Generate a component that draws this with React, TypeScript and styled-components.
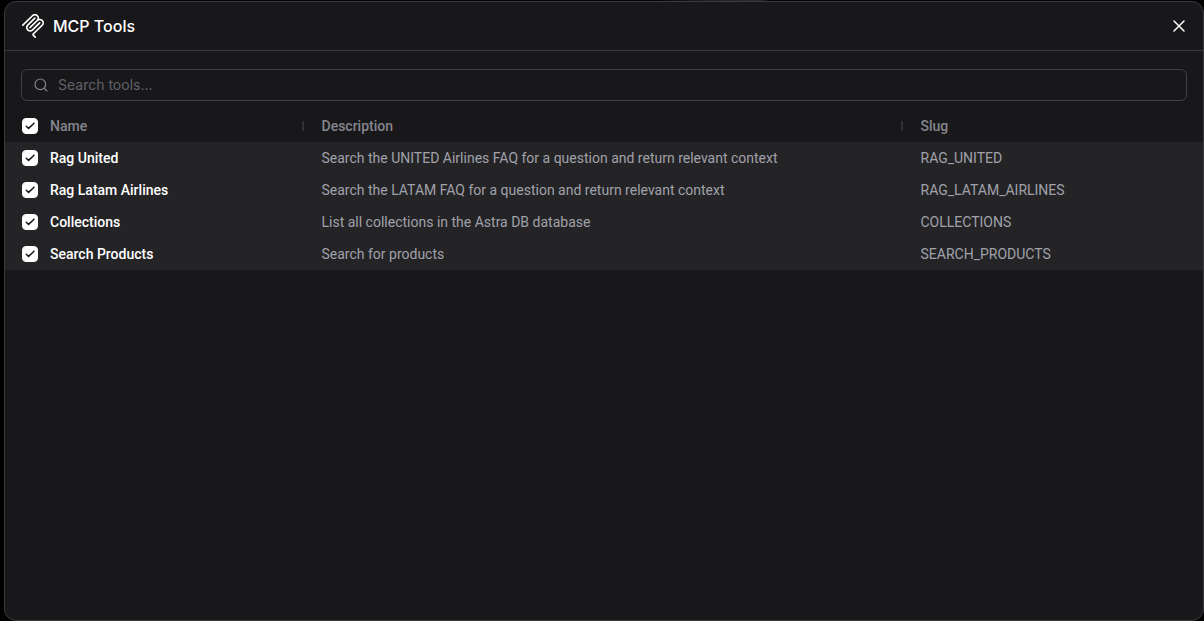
import React, { useState } from "react";
import styled, { createGlobalStyle } from "styled-components";

const GlobalStyle = createGlobalStyle`
  *, *::before, *::after { box-sizing: border-box; }
  html, body { margin: 0; background: #000; }
  body { font-family: Inter, "Liberation Sans", sans-serif; color: #fff; }
`;

const Page = styled.div`
  min-height: 100vh;
  display: flex;
  padding: 1px 0 0 4px;
  background: linear-gradient(90deg, transparent 54%, #202022 59%, #2a2a2c 63%, transparent 64%) #000;
  background-size: 100% 1px;
  background-repeat: no-repeat;
`;

const Dialog = styled.section`
  flex: 1;
  min-width: 0;
  display: flex;
  flex-direction: column;
  background: #18181b;
  border: 1px solid #3a3a3f;
  border-radius: 12px;
  overflow: hidden;
`;

const Header = styled.header`
  display: flex;
  align-items: center;
  gap: 8px;
  height: 49px;
  padding: 0 16px;
  border-bottom: 1px solid #3a3a3f;
`;

const Title = styled.h1`
  flex: 1;
  margin: 0;
  font-size: 16px;
  line-height: 24px;
  font-weight: 500;
`;

const CloseButton = styled.button`
  display: flex;
  padding: 0;
  border: 0;
  background: none;
  color: #fff;
  cursor: pointer;
`;

const SearchBox = styled.label`
  display: flex;
  align-items: center;
  gap: 9px;
  height: 32px;
  margin: 18px 16px 9px;
  padding: 0 11px;
  border: 1px solid #3f3f46;
  border-radius: 6px;
  color: #85858d;
`;

const SearchInput = styled.input`
  flex: 1;
  min-width: 0;
  padding: 0;
  border: 0;
  outline: 0;
  background: none;
  color: #fff;
  font: 400 14px/20px Inter, "Liberation Sans", sans-serif;
  &::placeholder { color: #62626a; opacity: 1; }
`;

const Table = styled.table`
  width: 100%;
  table-layout: fixed;
  border-collapse: collapse;
  font: 400 14px/20px Roboto, "Liberation Sans", sans-serif;
  color: #a1a1aa;
`;

const HeadCell = styled.th<{ $width: number; $divided?: boolean }>`
  width: ${(p) => p.$width}%;
  height: 32px;
  padding: 0 17px;
  text-align: left;
  font-weight: 500;
  color: #85858d;
  background: ${(p) =>
    p.$divided
      ? "linear-gradient(#313135, #313135) right 1px center / 2px 10px no-repeat"
      : "none"};
`;

const Row = styled.tr`
  background: #242427;
`;

const Cell = styled.td`
  height: 32px;
  padding: 0 17px;
  overflow: hidden;
  white-space: nowrap;
  text-overflow: ellipsis;
`;

const NameLabel = styled.label<{ $strong?: boolean }>`
  display: flex;
  align-items: center;
  gap: 12px;
  font-weight: 500;
  color: ${(p) => (p.$strong ? "#fff" : "inherit")};
`;

const CheckFrame = styled.span`
  display: grid;
  width: 16px;
  height: 16px;
  & > * { grid-area: 1 / 1; }
`;

const CheckInput = styled.input`
  appearance: none;
  width: 16px;
  height: 16px;
  margin: 0;
  border: 1px solid #fff;
  border-radius: 4px;
  &:checked { background: #fff; }
  &:not(:checked) + svg { visibility: hidden; }
`;

const CheckMark = styled.svg`
  pointer-events: none;
`;

const McpLogo = () => (
  <svg width="24" height="24" viewBox="0 0 24 24" fill="currentColor" fillRule="evenodd" aria-hidden="true">
    <path d="M15.688 2.343a2.588 2.588 0 00-3.61 0l-9.626 9.44a.863.863 0 01-1.203 0 .823.823 0 010-1.18l9.626-9.44a4.313 4.313 0 016.016 0 4.116 4.116 0 011.204 3.54 4.3 4.3 0 013.609 1.18l.05.05a4.115 4.115 0 010 5.9l-8.706 8.537a.274.274 0 000 .393l1.788 1.754a.823.823 0 010 1.18.863.863 0 01-1.203 0l-1.788-1.753a1.92 1.92 0 010-2.754l8.706-8.538a2.47 2.47 0 000-3.54l-.05-.049a2.588 2.588 0 00-3.607-.003l-7.172 7.034-.002.002-.098.097a.863.863 0 01-1.204 0 .823.823 0 010-1.18l7.273-7.133a2.47 2.47 0 00-.003-3.537z" />
    <path d="M14.485 4.703a.823.823 0 000-1.18.863.863 0 00-1.204 0l-7.119 6.982a4.115 4.115 0 000 5.9 4.314 4.314 0 006.016 0l7.12-6.982a.823.823 0 000-1.18.863.863 0 00-1.204 0l-7.119 6.982a2.588 2.588 0 01-3.61 0 2.47 2.47 0 010-3.54l7.12-6.982z" />
  </svg>
);

const SearchIcon = () => (
  <svg width="16" height="16" viewBox="0 0 24 24" fill="none" stroke="currentColor" strokeWidth="1.75" strokeLinecap="round" aria-hidden="true">
    <circle cx="11" cy="11" r="8" />
    <path d="m21 21-4.3-4.3" />
  </svg>
);

const CloseIcon = () => (
  <svg width="16" height="16" viewBox="0 0 16 16" fill="none" stroke="currentColor" strokeWidth="1.5" strokeLinecap="round" aria-hidden="true">
    <path d="M3 3l10 10M13 3 3 13" />
  </svg>
);

type CheckProps = { checked: boolean; onChange: () => void };

const Check = ({ checked, onChange }: CheckProps) => (
  <CheckFrame>
    <CheckInput type="checkbox" checked={checked} onChange={onChange} />
    <CheckMark width="16" height="16" viewBox="0 0 16 16" fill="none" stroke="#18181b" strokeWidth="1.5" strokeLinecap="round" strokeLinejoin="round">
      <path d="M4.3 8.2 6.6 10.4 12 5.2" />
    </CheckMark>
  </CheckFrame>
);

const tools = [
  { name: "Rag United", description: "Search the UNITED Airlines FAQ for a question and return relevant context", slug: "RAG_UNITED" },
  { name: "Rag Latam Airlines", description: "Search the LATAM FAQ for a question and return relevant context", slug: "RAG_LATAM_AIRLINES" },
  { name: "Collections", description: "List all collections in the Astra DB database", slug: "COLLECTIONS" },
  { name: "Search Products", description: "Search for products", slug: "SEARCH_PRODUCTS" },
];

export default function App() {
  const [selected, setSelected] = useState<string[]>(tools.map((t) => t.slug));
  const [query, setQuery] = useState("");
  const all = selected.length === tools.length;
  const toggle = (slug: string) =>
    setSelected((s) => (s.includes(slug) ? s.filter((x) => x !== slug) : [...s, slug]));
  const visible = tools.filter((t) => t.name.toLowerCase().includes(query.toLowerCase()));

  return (
    <>
      <GlobalStyle />
      <Page>
        <Dialog role="dialog" aria-labelledby="dialog-title">
          <Header>
            <McpLogo />
            <Title id="dialog-title">MCP Tools</Title>
            <CloseButton type="button" aria-label="Close">
              <CloseIcon />
            </CloseButton>
          </Header>
          <SearchBox>
            <SearchIcon />
            <SearchInput
              type="text"
              aria-label="Search tools"
              placeholder="Search tools..."
              value={query}
              onChange={(e) => setQuery(e.target.value)}
            />
          </SearchBox>
          <Table>
            <thead>
              <tr>
                <HeadCell $width={25} $divided>
                  <NameLabel>
                    <Check checked={all} onChange={() => setSelected(all ? [] : tools.map((t) => t.slug))} />
                    Name
                  </NameLabel>
                </HeadCell>
                <HeadCell $width={50} $divided>Description</HeadCell>
                <HeadCell $width={25}>Slug</HeadCell>
              </tr>
            </thead>
            <tbody>
              {visible.map((t) => (
                <Row key={t.slug}>
                  <Cell>
                    <NameLabel $strong>
                      <Check checked={selected.includes(t.slug)} onChange={() => toggle(t.slug)} />
                      {t.name}
                    </NameLabel>
                  </Cell>
                  <Cell>{t.description}</Cell>
                  <Cell>{t.slug}</Cell>
                </Row>
              ))}
            </tbody>
          </Table>
        </Dialog>
      </Page>
    </>
  );
}
